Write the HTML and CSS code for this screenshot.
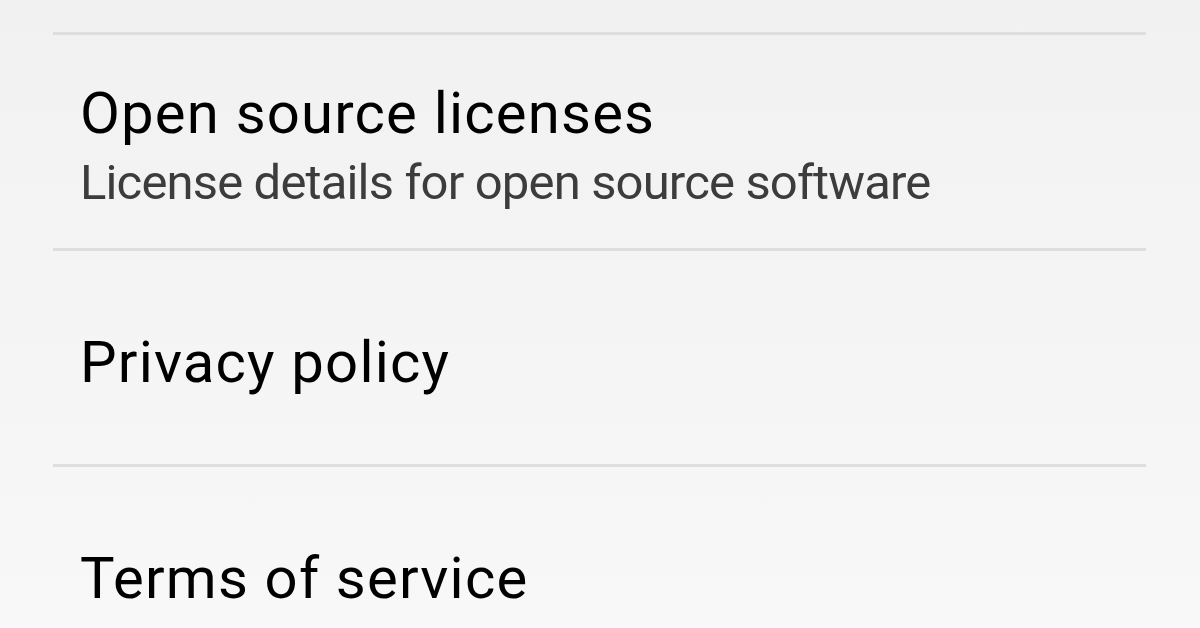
FILE: index.html
```html
<!DOCTYPE html>
<html>
<head>
<meta charset="utf-8">
<link rel="stylesheet" href="styles.css">
</head>
<body>
<div class="list">
  <div class="item">
    <div class="title">Open source licenses</div>
    <div class="summary">License details for open source software</div>
  </div>
  <div class="item">
    <div class="title">Privacy policy</div>
  </div>
  <div class="item">
    <div class="title">Terms of service</div>
  </div>
</div>
</body>
</html>
```

FILE: styles.css
```css
html, body {
  margin: 0;
  padding: 0;
  overflow: hidden;
}
body {
  width: 1200px;
  height: 628px;
  background: linear-gradient(to bottom, #f1f1f1, #f8f8f8);
  font-family: Roboto, "Noto Sans", sans-serif;
}
.list {
  display: flex;
  flex-direction: column;
  height: 628px;
  overflow: hidden;
  padding: 32px 54px 0 53px;
  box-sizing: border-box;
}
.item {
  flex: none;
  border-top: 3px solid #dedede;
  height: 213px;
  box-sizing: content-box;
  display: flex;
  flex-direction: column;
  justify-content: center;
  padding: 8px 0 0 27px;
  height: 205px;
}
.title {
  font-size: 58px;
  line-height: 66px;
  letter-spacing: 1.2px;
  color: #000;
}
.summary {
  margin-top: 8px;
  font-size: 49px;
  line-height: 58px;
  letter-spacing: -0.85px;
  color: #3c3c3c;
}
```
